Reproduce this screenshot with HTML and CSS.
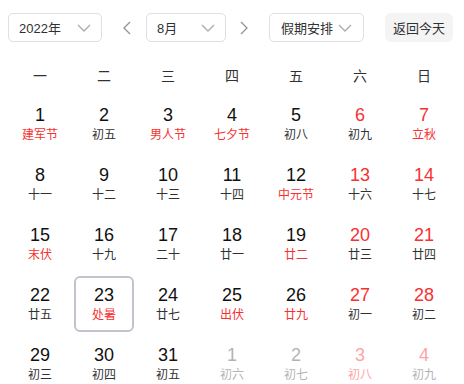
FILE: index.html
```html
<!DOCTYPE html>
<html lang="zh-CN">
<head>
    <meta charset="UTF-8">
    <meta name="viewport" content="width=device-width, initial-scale=1.0">
    <title>日历</title>
    <link rel="stylesheet" href="styles.css">
</head>
<body>
    <div class="toolbar">
        <div class="select select-year">
            <span>2022年</span>
            <svg class="chevron" viewBox="0 0 14 8"><path d="M1 1l6 6 6-6"/></svg>
        </div>
        <button class="arrow arrow-prev" type="button">
            <svg viewBox="0 0 8 14"><path d="M7 1L1 7l6 6"/></svg>
        </button>
        <div class="select select-month">
            <span>8月</span>
            <svg class="chevron" viewBox="0 0 14 8"><path d="M1 1l6 6 6-6"/></svg>
        </div>
        <button class="arrow arrow-next" type="button">
            <svg viewBox="0 0 8 14"><path d="M1 1l6 6-6 6"/></svg>
        </button>
        <div class="select select-holiday">
            <span>假期安排</span>
            <svg class="chevron" viewBox="0 0 14 8"><path d="M1 1l6 6 6-6"/></svg>
        </div>
        <button class="today-btn" type="button">返回今天</button>
    </div>

    <div class="weekdays">
        <div>一</div><div>二</div><div>三</div><div>四</div><div>五</div><div>六</div><div>日</div>
    </div>

    <div class="days" id="days"></div>

    <script>
        // [day, lunar, flags]  flags: r = red lunar, w = weekend, o = other month, t = today
        const days = [
            [1, '建军节', 'r'], [2, '初五', ''], [3, '男人节', 'r'], [4, '七夕节', 'r'], [5, '初八', ''], [6, '初九', 'w'], [7, '立秋', 'wr'],
            [8, '十一', ''], [9, '十二', ''], [10, '十三', ''], [11, '十四', ''], [12, '中元节', 'r'], [13, '十六', 'w'], [14, '十七', 'w'],
            [15, '末伏', 'r'], [16, '十九', ''], [17, '二十', ''], [18, '廿一', ''], [19, '廿二', 'r'], [20, '廿三', 'w'], [21, '廿四', 'w'],
            [22, '廿五', ''], [23, '处暑', 'rt'], [24, '廿七', ''], [25, '出伏', 'r'], [26, '廿九', 'r'], [27, '初一', 'w'], [28, '初二', 'w'],
            [29, '初三', ''], [30, '初四', ''], [31, '初五', ''], [1, '初六', 'o'], [2, '初七', 'o'], [3, '初八', 'owr'], [4, '初九', 'ow']
        ];

        const container = document.getElementById('days');
        days.forEach(([num, lunar, flags]) => {
            const cell = document.createElement('div');
            cell.className = 'day';
            if (flags.includes('w')) cell.classList.add('weekend');
            if (flags.includes('r')) cell.classList.add('festival');
            if (flags.includes('o')) cell.classList.add('other');
            if (flags.includes('t')) cell.classList.add('today');
            cell.innerHTML = `<span class="num">${num}</span><span class="lunar">${lunar}</span>`;
            container.appendChild(cell);
        });
    </script>
</body>
</html>
```

FILE: styles.css
```css
body {
    margin: 0;
    padding: 13px 8px 0;
    font-family: "Liberation Sans", "Noto Sans CJK SC", sans-serif;
    color: #1f2329;
    background: #fff;
    overflow: hidden;
}
.toolbar {
    display: flex;
    align-items: center;
    height: 29px;
}
.select {
    box-sizing: border-box;
    height: 29px;
    display: flex;
    align-items: center;
    justify-content: space-between;
    padding: 0 10px;
    border: 1px solid #dcdfe6;
    border-radius: 5px;
    font-size: 13px;
    color: #303133;
}
.select-year {
    width: 94px;
}
.select-month {
    width: 80px;
    margin-left: 9px;
}
.select-holiday {
    width: 95px;
    margin-left: 15px;
    padding: 0 11px 0 11px;
}
.chevron {
    width: 14px;
    height: 8px;
    fill: none;
    stroke: #a8abb2;
    stroke-width: 1.3;
}
.arrow {
    width: 20px;
    height: 29px;
    padding: 0;
    border: none;
    background: none;
    display: flex;
    align-items: center;
    justify-content: center;
    margin-left: 15px;
}
.arrow-next {
    margin-left: 8px;
}
.arrow svg {
    width: 8px;
    height: 14px;
    fill: none;
    stroke: #909399;
    stroke-width: 1.3;
}
.today-btn {
    margin-left: 21px;
    width: 68px;
    height: 29px;
    padding: 0;
    border: none;
    border-radius: 6px;
    background: #f4f4f5;
    color: #303133;
    font-family: inherit;
    font-size: 13px;
}
.weekdays {
    display: grid;
    grid-template-columns: repeat(7, 64px);
    margin-top: 22px;
    height: 24px;
    line-height: 24px;
    text-align: center;
    font-size: 14px;
    color: #303133;
}
.days {
    display: grid;
    grid-template-columns: repeat(7, 64px);
    grid-auto-rows: 60px;
    margin-top: 6px;
}
.day {
    box-sizing: border-box;
    margin: 2px;
    border: 2px solid transparent;
    border-radius: 6px;
    display: flex;
    flex-direction: column;
    align-items: center;
    justify-content: center;
    gap: 2px;
}
.day.today {
    border-color: #c0c4cc;
}
.num {
    font-size: 18px;
    line-height: 20px;
    color: #111;
}
.lunar {
    font-size: 12px;
    line-height: 16px;
    color: #303133;
}
.weekend .num {
    color: #f73131;
}
.festival .lunar {
    color: #f73131;
}
.other .num,
.other .lunar {
    color: #b4b4b4;
}
.other.weekend .num,
.other.festival .lunar {
    color: #fca5a8;
}
```
